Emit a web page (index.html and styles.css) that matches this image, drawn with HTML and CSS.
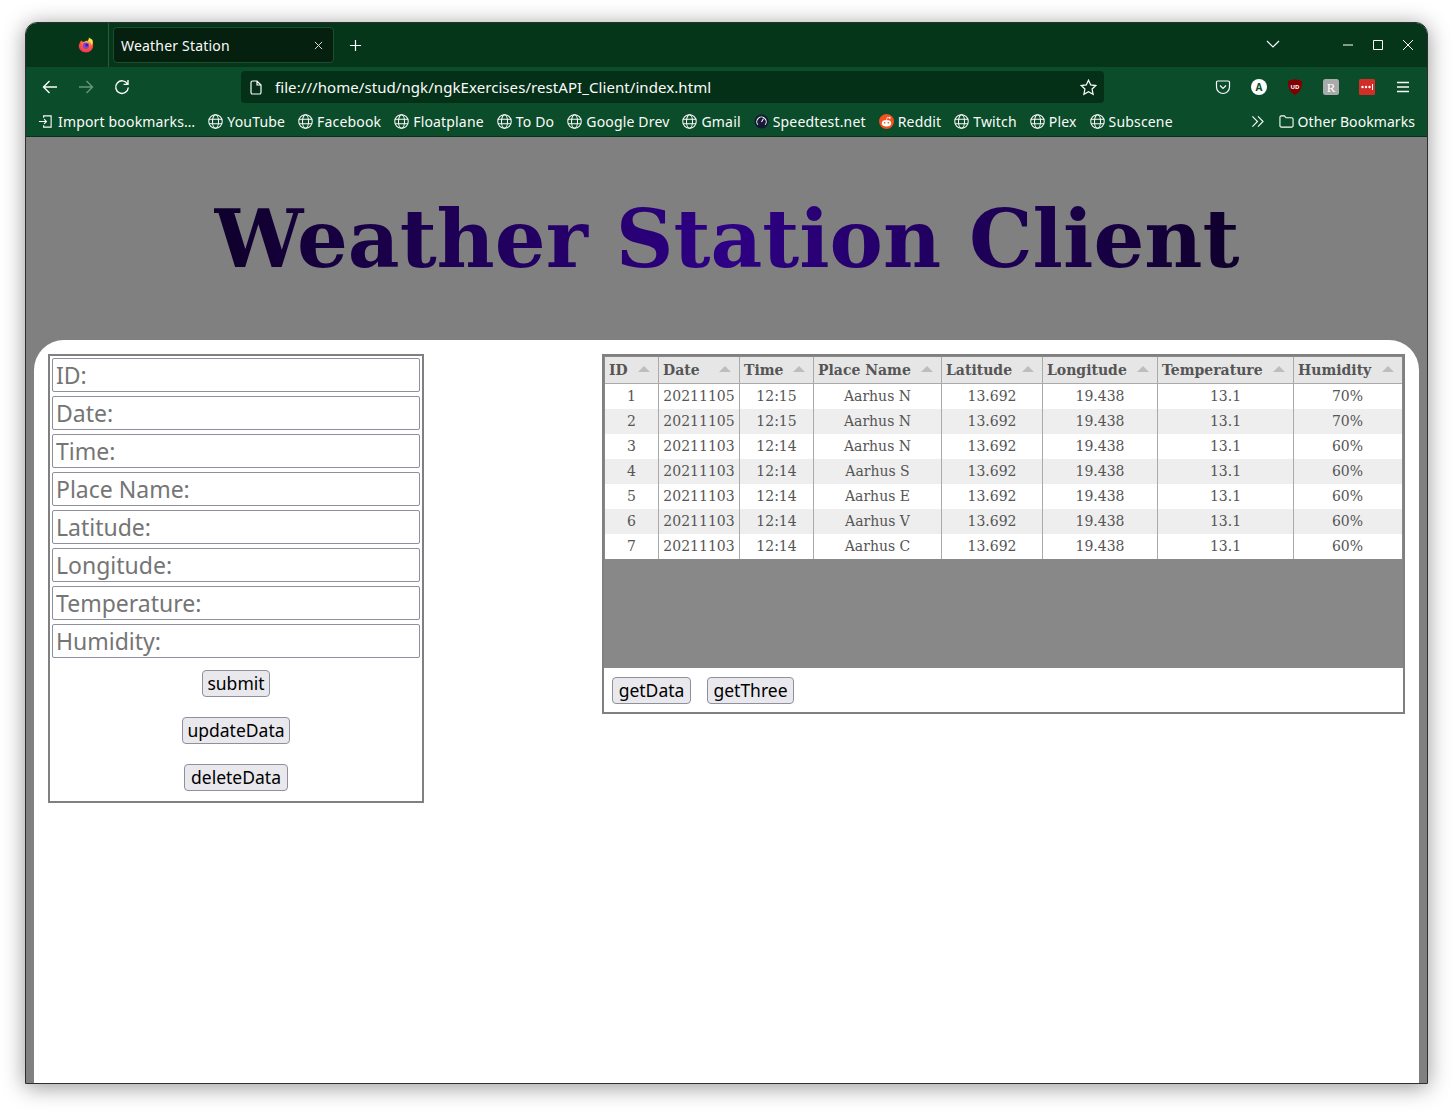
FILE: index.html
```html
<!DOCTYPE html>
<html lang="en">
<head>
<meta charset="utf-8">
<title>Weather Station</title>
<link rel="stylesheet" href="styles.css">
</head>
<body>
<svg class="defs" width="0" height="0" aria-hidden="true">
  <defs>
    <symbol id="globe" viewBox="0 0 16 16">
      <g fill="none" stroke="currentColor" stroke-width="1.1">
        <circle cx="8" cy="8" r="7.2"/>
        <ellipse cx="8" cy="8" rx="3.2" ry="7.2"/>
        <path d="M.9 5.600h14.200M.9 10.400h14.200"/>
      </g>
    </symbol>
    <radialGradient id="ffbody" cx="0.55" cy="0.35" r="0.8">
      <stop offset="0" stop-color="#ffbd3a"/>
      <stop offset="0.5" stop-color="#ff5a2e"/>
      <stop offset="1" stop-color="#e31587"/>
    </radialGradient>
  </defs>
</svg>
<div class="window">
  <header class="titlebar">
    <svg class="firefox" viewBox="0 0 16 16">
      <path fill="url(#ffbody)" d="M2 5.500C.8 7 .6 9 .9 10.300 1.700 13.600 4.600 15.500 8 15.500c4 0 7.200-3 7.200-7 0-2.500-1-4.600-2.700-5.800-.5-1-1-1.700-1.600-2.200.1 1.500-.2 2.500-1 3.400C8.500 3.700 7 4 6 5 4.800 4.600 3.800 4.500 3.400 3.600 2.600 4 2.200 4.700 2 5.500z"/>
      <path fill="#ffe14d" d="M10.900.5c.1 1.500-.2 2.500-1 3.400 2 .6 3.600 2.200 3.600 4.600 1.200-1.400 1.700-3.400 1-5.500-1-1-2.600-1.600-3.600-2.500z"/>
      <circle cx="8" cy="8.800" r="3.200" fill="#8a3fd8"/>
      <circle cx="8.700" cy="8" r="1.500" fill="#3a1fa8"/>
    </svg>
    <span class="tab-sep"></span>
    <div class="tab">
      <span class="tab-title">Weather Station</span>
      <svg class="tab-close" viewBox="0 0 10 10"><path d="M1 1l8 8M9 1l-8 8"/></svg>
    </div>
    <svg class="newtab" viewBox="0 0 14 14"><path d="M7 1v12M1 7h12"/></svg>
    <svg class="tablist" viewBox="0 0 14 8"><path d="M1 1l6 6 6-6"/></svg>
    <div class="winctl">
      <svg viewBox="0 0 10 10"><path d="M0 5h10"/></svg>
      <svg viewBox="0 0 10 10"><path d="M.5.5h9v9h-9z"/></svg>
      <svg viewBox="0 0 10 10"><path d="M0 0l10 10M10 0L0 10"/></svg>
    </div>
  </header>

  <nav class="navbar">
    <svg class="navicon" viewBox="0 0 16 16"><path d="M15 8H1.500M7.500 2l-6 6 6 6"/></svg>
    <svg class="navicon dim" viewBox="0 0 16 16"><path d="M1 8h13.500M8.500 2l6 6-6 6"/></svg>
    <svg class="navicon" viewBox="0 0 16 16"><path d="M13.500 5A6.300 6.300 0 1 0 14.300 8.500M14 1v4.400H9.600"/></svg>
    <div class="urlbar">
      <svg class="urlpage" viewBox="0 0 12 15"><path d="M1 2.500A1.500 1.500 0 0 1 2.500 1H7l4 4v7.500a1.500 1.500 0 0 1-1.500 1.500h-7A1.500 1.500 0 0 1 1 12.500zM7 1v4h4"/></svg>
      <span class="urltext">file:///home/stud/ngk/ngkExercises/restAPI_Client/index.html</span>
      <svg class="urlstar" viewBox="0 0 16 16"><path d="M8 1.200l2.100 4.400 4.800.6-3.500 3.300.9 4.800L8 12l-4.300 2.300.9-4.800L1.100 6.200l4.800-.6z"/></svg>
    </div>
    <div class="exts">
      <svg class="ext" viewBox="0 0 16 16"><path class="ext-line" d="M1.500 3.300A1.300 1.300 0 0 1 2.800 2h10.400a1.300 1.300 0 0 1 1.300 1.300V8a6.500 6.500 0 0 1-13 0z"/><path class="ext-line" d="M5 6.500l3 3 3-3"/></svg>
      <svg class="ext" viewBox="0 0 16 16"><circle cx="8" cy="8" r="8" fill="#fff"/><text x="8" y="11.500" class="ext-a">A</text></svg>
      <svg class="ext" viewBox="0 0 16 16"><path fill="#800000" d="M8 0l7 2c0 7-1.500 11-7 14C2.500 13 1 9 1 2z"/><text x="8" y="9.800" class="ext-ub">UD</text></svg>
      <svg class="ext" viewBox="0 0 16 16"><rect width="16" height="16" rx="2.500" fill="#aaa"/><text x="8" y="12.500" class="ext-r">R</text></svg>
      <svg class="ext" viewBox="0 0 16 16"><rect width="16" height="16" rx="1.500" fill="#d32d27"/><circle cx="3.500" cy="8" r="1.200" fill="#fff"/><circle cx="7" cy="8" r="1.200" fill="#fff"/><circle cx="10.500" cy="8" r="1.200" fill="#fff"/><path d="M13.500 5v6" stroke="#fff" stroke-width="1"/></svg>
      <svg class="ext menu" viewBox="0 0 16 16"><path d="M2 3.500h12M2 8h12M2 12.500h12"/></svg>
    </div>
  </nav>

  <div class="bookmarks">
    <a class="bm bm-import"><svg class="bmicon" viewBox="0 0 16 16"><path class="ext-line" d="M6 4V2h8v12H6v-2M1 8h8M6.500 5.500L9 8l-2.500 2.500"/></svg>Import bookmarks…</a>
    <a class="bm"><svg class="bmicon"><use href="#globe"/></svg>YouTube</a>
    <a class="bm"><svg class="bmicon"><use href="#globe"/></svg>Facebook</a>
    <a class="bm"><svg class="bmicon"><use href="#globe"/></svg>Floatplane</a>
    <a class="bm"><svg class="bmicon"><use href="#globe"/></svg>To Do</a>
    <a class="bm"><svg class="bmicon"><use href="#globe"/></svg>Google Drev</a>
    <a class="bm"><svg class="bmicon"><use href="#globe"/></svg>Gmail</a>
    <a class="bm"><svg class="bmicon" viewBox="0 0 16 16"><circle cx="8" cy="8" r="7.500" fill="#141a33"/><path d="M4.200 11.500a5 5 0 1 1 7.600 0M8 8.500l2-3.500" fill="none" stroke="#fff" stroke-width="1.100"/></svg>Speedtest.net</a>
    <a class="bm"><svg class="bmicon" viewBox="0 0 16 16"><circle cx="8" cy="8" r="8" fill="#f4511e"/><ellipse cx="8" cy="9.800" rx="5" ry="3.400" fill="#fff"/><circle cx="6" cy="9.300" r=".9" fill="#f4511e"/><circle cx="10" cy="9.300" r=".9" fill="#f4511e"/><path d="M8 6.500L8.800 3.500l2.400.6" fill="none" stroke="#fff" stroke-width=".8"/><circle cx="11.500" cy="4" r="1" fill="#fff"/></svg>Reddit</a>
    <a class="bm"><svg class="bmicon"><use href="#globe"/></svg>Twitch</a>
    <a class="bm"><svg class="bmicon"><use href="#globe"/></svg>Plex</a>
    <a class="bm"><svg class="bmicon"><use href="#globe"/></svg>Subscene</a>
    <svg class="bm-more" viewBox="0 0 14 14"><path d="M1.500 1.500L7 7l-5.500 5.500M7.500 1.500L13 7l-5.500 5.500"/></svg>
    <a class="bm bm-other"><svg class="bmicon" viewBox="0 0 16 16"><path class="ext-line" d="M1 3.500A1.500 1.500 0 0 1 2.500 2h3.300L7.500 4h6A1.500 1.500 0 0 1 15 5.500v7a1.500 1.500 0 0 1-1.500 1.500h-11A1.500 1.500 0 0 1 1 12.500z"/></svg>Other Bookmarks</a>
  </div>

  <main class="page">
    <div class="page-head"><h1 class="title">Weather Station Client</h1></div>
    <div class="sheet">
      <form class="entry">
        <input class="field" placeholder="ID:">
        <input class="field" placeholder="Date:">
        <input class="field" placeholder="Time:">
        <input class="field" placeholder="Place Name:">
        <input class="field" placeholder="Latitude:">
        <input class="field" placeholder="Longitude:">
        <input class="field" placeholder="Temperature:">
        <input class="field" placeholder="Humidity:">
        <div class="entry-actions">
          <button type="button" class="btn btn-submit">submit</button>
          <button type="button" class="btn btn-update">updateData</button>
          <button type="button" class="btn btn-delete">deleteData</button>
        </div>
      </form>
      <section class="grid-panel">
        <div class="grid-view">
          <table class="grid">
            <colgroup>
              <col class="c-id"><col class="c-date"><col class="c-time"><col class="c-place"><col class="c-lat"><col class="c-lon"><col class="c-temp"><col class="c-hum">
            </colgroup>
            <thead>
              <tr><th>ID</th><th>Date</th><th>Time</th><th>Place Name</th><th>Latitude</th><th>Longitude</th><th>Temperature</th><th>Humidity</th></tr>
            </thead>
            <tbody>
              <tr><td>1</td><td>20211105</td><td>12:15</td><td>Aarhus N</td><td>13.692</td><td>19.438</td><td>13.1</td><td>70%</td></tr>
              <tr><td>2</td><td>20211105</td><td>12:15</td><td>Aarhus N</td><td>13.692</td><td>19.438</td><td>13.1</td><td>70%</td></tr>
              <tr><td>3</td><td>20211103</td><td>12:14</td><td>Aarhus N</td><td>13.692</td><td>19.438</td><td>13.1</td><td>60%</td></tr>
              <tr><td>4</td><td>20211103</td><td>12:14</td><td>Aarhus S</td><td>13.692</td><td>19.438</td><td>13.1</td><td>60%</td></tr>
              <tr><td>5</td><td>20211103</td><td>12:14</td><td>Aarhus E</td><td>13.692</td><td>19.438</td><td>13.1</td><td>60%</td></tr>
              <tr><td>6</td><td>20211103</td><td>12:14</td><td>Aarhus V</td><td>13.692</td><td>19.438</td><td>13.1</td><td>60%</td></tr>
              <tr><td>7</td><td>20211103</td><td>12:14</td><td>Aarhus C</td><td>13.692</td><td>19.438</td><td>13.1</td><td>60%</td></tr>
            </tbody>
          </table>
        </div>
        <div class="grid-actions">
          <button type="button" class="btn btn-get">getData</button>
          <button type="button" class="btn btn-three">getThree</button>
        </div>
      </section>
    </div>
  </main>
</div>
</body>
</html>
```

FILE: styles.css
```css
* { box-sizing: border-box; }
html, body { margin: 0; padding: 0; background: #fff; }
body { height: 1112px; overflow: hidden; padding: 22px 25px 0; font-family: "Noto Sans", sans-serif; }
.defs { position: absolute; }

.window {
  width: 1403px; height: 1062px; display: flex; flex-direction: column; overflow: hidden;
  border: 1px solid #2e2e2e; border-radius: 12px 12px 0 0;
  box-shadow: 0 3px 22px rgba(0,0,0,.42);
}
svg { flex: none; display: block; }

.titlebar { height: 44px; background: #05361a; display: flex; align-items: center; flex: none; color: #fff; }
.firefox { width: 16px; height: 16px; margin-left: 52px; }
.tab-sep { width: 1px; height: 44px; background: #2a5a3c; margin-left: 14px; }
.tab {
  width: 221px; height: 36px; margin-left: 4px; padding: 0 10px 0 7px; display: flex; align-items: center; justify-content: space-between;
  background: #06200f; border: 1px solid #1c4f30; border-radius: 4px; font-size: 14px; letter-spacing: .2px; color: #fbfbfb;
}
.tab-close { width: 9px; height: 9px; fill: none; stroke: #ddd; stroke-width: 1.1; }
.newtab { width: 13px; height: 13px; margin-left: 15px; fill: none; stroke: #fff; stroke-width: 1.3; }
.tablist { width: 14px; height: 8px; margin-left: 904px; margin-top: -3px; fill: none; stroke: #fff; stroke-width: 1.2; }
.winctl { display: flex; gap: 20px; margin-left: 63px; }
.winctl svg { width: 10px; height: 10px; fill: none; stroke: #fff; stroke-width: 1; }

.navbar { height: 41px; background: #0b4d2a; display: flex; align-items: center; flex: none; padding: 0 0 1px 16px; }
.navicon { width: 16px; height: 16px; margin-right: 20px; fill: none; stroke: #fbfbfb; stroke-width: 1.4; }
.navicon.dim { opacity: .4; }
.urlbar {
  width: 863px; height: 32px; margin-left: 91px; padding: 0 7px 0 9px; display: flex; align-items: center;
  background: #053018; border-radius: 4px; color: #fbfbfb; font-size: 15px; letter-spacing: .07px;
}
.urlpage { width: 12px; height: 15px; fill: none; stroke: #fbfbfb; stroke-width: 1.2; }
.urltext { margin-left: 13px; flex: 1; white-space: nowrap; }
.urlstar { width: 17px; height: 17px; fill: none; stroke: #fbfbfb; stroke-width: 1.2; }
.exts { display: flex; gap: 20px; margin-left: 111px; }
.ext { width: 16px; height: 16px; }
.ext-line { fill: none; stroke: #fbfbfb; stroke-width: 1.2; }
.ext-a { font: 700 10px "Noto Sans", sans-serif; text-anchor: middle; fill: #0b4d2a; }
.ext-ub { font: 700 6px "Noto Sans", sans-serif; text-anchor: middle; fill: #fff; }
.ext-r { font: 400 13px "Liberation Serif", serif; text-anchor: middle; fill: #fff; }
.menu { fill: none; stroke: #fbfbfb; stroke-width: 1.3; }

.bookmarks {
  height: 29px; background: #0b4d2a; border-bottom: 1px solid #04331a; display: flex; align-items: center; flex: none;
  padding: 0 12px 1px 12px; color: #fbfbfb; font-size: 14px; letter-spacing: .17px; white-space: nowrap; gap: 13px;
}
.bm { display: flex; align-items: center; gap: 4px; }
.bm-import { gap: 5px; }
.bmicon { width: 15px; height: 15px; color: #fbfbfb; }
.bm-more { width: 13px; height: 13px; margin-left: auto; fill: none; stroke: #fbfbfb; stroke-width: 1.2; }
.bm-other { margin-left: 2px; letter-spacing: .07px; }

.page { flex: 1; background: #808080; padding: 0 8px; display: flex; flex-direction: column; }
.page-head { height: 203px; display: flex; justify-content: center; padding-top: 54px; flex: none; }
.title {
  margin: 0; height: 96px; font: 700 80px/96px "DejaVu Serif", serif; white-space: nowrap;
  background: linear-gradient(90deg, #0f002b 0%, #2e0085 50%, #0f002b 100%);
  -webkit-background-clip: text; background-clip: text; color: transparent;
}
.sheet {
  flex: 1; background: #fff; border-radius: 30px 30px 0 0; padding: 14px 14px 0; display: flex; justify-content: space-between; align-items: flex-start;
}

.entry { width: 376px; border: 2px solid #808080; padding: 2px; display: flex; flex-direction: column; gap: 4px; }
.field {
  width: 368px; height: 34px; padding: 0 3px; border: 1px solid #8f8f9d; border-radius: 2px; background: #fff;
  font: 23px "Noto Sans", sans-serif; color: #000; outline: none;
}
.field::placeholder { color: #757575; opacity: 1; }
.entry-actions { display: flex; flex-direction: column; align-items: center; gap: 20px; padding: 8px 0 8px; }
.btn {
  height: 27px; padding: 0; border: 1px solid #8f8f9d; border-radius: 4px; background: #e9e9ed; color: #000;
  font: 17.500px/25px "Noto Sans", sans-serif;
}
.btn-submit { width: 68px; }
.btn-update { width: 108px; }
.btn-delete { width: 104px; }
.btn-get { width: 79px; }
.btn-three { width: 87px; }

.grid-panel { width: 803px; border: 2px solid #808080; }
.grid-view { height: 312px; background: #888; padding: 1px 1px 0; }
.grid { width: 797px; table-layout: fixed; border-collapse: separate; border-spacing: 0; font: 14px "DejaVu Serif", serif; color: #555; }
.c-id { width: 54px; } .c-date { width: 81px; } .c-time { width: 74px; } .c-place { width: 128px; }
.c-lat { width: 101px; } .c-lon { width: 115px; } .c-temp { width: 136px; } .c-hum { width: 108px; }
.grid th {
  position: relative; height: 27px; padding: 0 4px; text-align: left; font-weight: 700; background: #e6e6e6;
  border-right: 1px solid #aaa; border-bottom: 1px solid #aaa; white-space: nowrap;
}
.grid th:last-child { border-right: 0; }
.grid th::after {
  content: ""; position: absolute; right: 8px; top: 9px;
  border-left: 6px solid transparent; border-right: 6px solid transparent; border-bottom: 6px solid #bdbdbd;
}
.grid td { height: 25px; padding: 0 4px 2px; text-align: center; background: #fff; border-right: 1px solid #aaa; white-space: nowrap; }
.grid td:last-child { border-right: 0; padding-right: 5px; }
.grid tbody tr:nth-child(even) td { background: #eee; }
.grid-actions { height: 44px; padding: 9px 8px 0; display: flex; gap: 16px; align-items: flex-start; background: #fff; }
```
